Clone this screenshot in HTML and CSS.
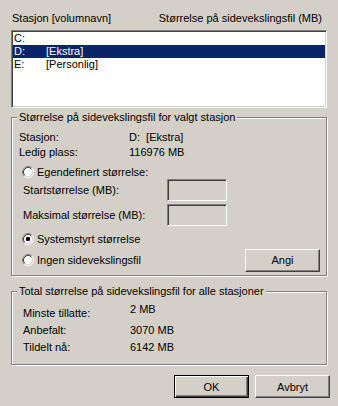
FILE: index.html
```html
<!DOCTYPE html>
<html lang="no">
<head>
    <meta charset="UTF-8">
    <meta name="viewport" content="width=device-width, initial-scale=1.0">
    <title>Virtuelt minne</title>
    <link rel="stylesheet" href="styles.css">
</head>
<body>
    <div class="dialog">
        <div class="list-head">
            <span>Stasjon [volumnavn]</span>
            <span>Størrelse på sidevekslingsfil (MB)</span>
        </div>
        <div class="list">
            <div class="list-row"><span class="drive">C:</span><span></span></div>
            <div class="list-row selected"><span class="drive">D:</span><span>[Ekstra]</span></div>
            <div class="list-row"><span class="drive">E:</span><span>[Personlig]</span></div>
        </div>

        <div class="group group-drive">
            <div class="group-title">Størrelse på sidevekslingsfil for valgt stasjon</div>
            <div class="info-row"><span class="info-label">Stasjon:</span><span>D:&nbsp; [Ekstra]</span></div>
            <div class="info-row"><span class="info-label">Ledig plass:</span><span>116976 MB</span></div>
            <div class="radio-row first-radio">
                <svg class="radio" width="12" height="12" viewBox="0 0 12 12">
                    <circle cx="6" cy="6" r="4.5" fill="#fff"/>
                    <path d="M2.11 9.89 A5.5 5.5 0 0 1 9.89 2.11" fill="none" stroke="#808080"/>
                    <path d="M2.11 9.89 A5.5 5.5 0 0 0 9.89 2.11" fill="none" stroke="#fff"/>
                    <path d="M2.82 9.18 A4.5 4.5 0 0 1 9.18 2.82" fill="none" stroke="#404040"/>
                    <path d="M2.82 9.18 A4.5 4.5 0 0 0 9.18 2.82" fill="none" stroke="#d4d0c8"/>
                </svg>
                <span>Egendefinert størrelse:</span>
            </div>
            <div class="size-row">
                <span class="size-label">Startstørrelse (MB):</span>
                <div class="textbox"></div>
            </div>
            <div class="size-row size-max">
                <span class="size-label">Maksimal størrelse (MB):</span>
                <div class="textbox"></div>
            </div>
            <div class="radio-row system-radio">
                <svg class="radio" width="12" height="12" viewBox="0 0 12 12">
                    <circle cx="6" cy="6" r="4.5" fill="#fff"/>
                    <path d="M2.11 9.89 A5.5 5.5 0 0 1 9.89 2.11" fill="none" stroke="#808080"/>
                    <path d="M2.11 9.89 A5.5 5.5 0 0 0 9.89 2.11" fill="none" stroke="#fff"/>
                    <path d="M2.82 9.18 A4.5 4.5 0 0 1 9.18 2.82" fill="none" stroke="#404040"/>
                    <path d="M2.82 9.18 A4.5 4.5 0 0 0 9.18 2.82" fill="none" stroke="#d4d0c8"/>
                    <rect x="4" y="4" width="4" height="4" rx="1.2" fill="#000"/>
                </svg>
                <span>Systemstyrt størrelse</span>
            </div>
            <div class="radio-row last-radio">
                <div class="radio-wrap">
                    <svg class="radio" width="12" height="12" viewBox="0 0 12 12">
                        <circle cx="6" cy="6" r="4.5" fill="#fff"/>
                        <path d="M2.11 9.89 A5.5 5.5 0 0 1 9.89 2.11" fill="none" stroke="#808080"/>
                        <path d="M2.11 9.89 A5.5 5.5 0 0 0 9.89 2.11" fill="none" stroke="#fff"/>
                        <path d="M2.82 9.18 A4.5 4.5 0 0 1 9.18 2.82" fill="none" stroke="#404040"/>
                        <path d="M2.82 9.18 A4.5 4.5 0 0 0 9.18 2.82" fill="none" stroke="#d4d0c8"/>
                    </svg>
                    <span>Ingen sidevekslingsfil</span>
                </div>
                <button class="btn btn-angi">Angi</button>
            </div>
        </div>

        <div class="group group-total">
            <div class="group-title">Total størrelse på sidevekslingsfil for alle stasjoner</div>
            <div class="total-row"><span class="total-label">Minste tillatte:</span><span class="raised">2 MB</span></div>
            <div class="total-row"><span class="total-label">Anbefalt:</span><span>3070 MB</span></div>
            <div class="total-row"><span class="total-label">Tildelt nå:</span><span>6142 MB</span></div>
        </div>

        <div class="buttons">
            <button class="btn btn-default">OK</button>
            <button class="btn">Avbryt</button>
        </div>
    </div>
</body>
</html>
```

FILE: styles.css
```css
body {
    margin: 0;
    background: #d4d0c8;
    font-family: "Liberation Sans", Arial, sans-serif;
    font-size: 11px;
    color: #000;
}
.dialog {
    padding: 12px 8px 0 11px;
}
.list-head {
    width: 316px;
    box-sizing: border-box;
    display: flex;
    justify-content: space-between;
    line-height: 13px;
    height: 13px;
    padding: 0 5px 0 1px;
}
.list {
    width: 316px;
    height: 78px;
    box-sizing: border-box;
    margin-top: 5px;
    background: #fff;
    border: 1px solid;
    border-color: #808080 #fff #fff #808080;
    box-shadow: inset 1px 1px #404040, inset -1px -1px #d4d0c8;
    padding: 1px;
}
.list-row {
    display: flex;
    height: 13px;
    line-height: 13px;
    padding-left: 1px;
}
.list-row .drive {
    width: 32px;
}
.list-row.selected {
    background: #0a246a;
    color: #fff;
}
.group {
    width: 316px;
    box-sizing: border-box;
    border: 1px solid #808080;
    box-shadow: inset 1px 1px #fff, 1px 1px #fff;
}
.group-drive {
    margin-top: 9px;
    padding-bottom: 4px;
}
.group-title {
    width: fit-content;
    margin: -7px 0 0 5px;
    padding: 0 2px;
    line-height: 13px;
    background: #d4d0c8;
}
.info-row {
    display: flex;
    height: 15px;
    line-height: 15px;
    padding-left: 7px;
}
.info-row:first-of-type,
.group-title + .info-row {
    margin-top: 6px;
}
.info-label {
    width: 110px;
}
.radio-row {
    display: flex;
    align-items: center;
    height: 14px;
    padding-left: 10px;
}
.radio-wrap {
    display: flex;
    align-items: center;
}
.radio {
    display: block;
    margin-right: 3px;
}
.first-radio {
    margin-top: 5px;
}
.system-radio {
    margin-top: 6px;
}
.last-radio {
    height: 22px;
    margin-top: 3px;
    justify-content: space-between;
    padding-right: 6px;
}
.size-row {
    display: flex;
    align-items: center;
    height: 22px;
    padding-left: 11px;
}
.size-max {
    margin-top: 3px;
}
.size-label {
    width: 144px;
}
.textbox {
    width: 60px;
    height: 22px;
    box-sizing: border-box;
    border: 1px solid;
    border-color: #808080 #fff #fff #808080;
    box-shadow: inset 1px 1px #404040, inset -1px -1px #d4d0c8;
}
.btn {
    width: 75px;
    height: 23px;
    box-sizing: border-box;
    padding: 0;
    font-family: inherit;
    font-size: 11px;
    color: #000;
    background: #d4d0c8;
    border: 1px solid;
    border-color: #fff #404040 #404040 #fff;
    box-shadow: inset -1px -1px #808080;
}
.btn-default {
    border: 1px solid #000;
    box-shadow: inset 1px 1px #fff, inset -1px -1px #404040, inset -2px -2px #808080;
}
.group-total {
    margin-top: 15px;
    padding-bottom: 9px;
}
.total-row {
    display: flex;
    align-items: center;
    height: 17px;
    padding-left: 11px;
}
.group-title + .total-row {
    margin-top: 6px;
}
.total-label {
    width: 107px;
}
.raised {
    margin-bottom: 8px;
}
.buttons {
    display: flex;
    justify-content: flex-end;
    gap: 6px;
    margin-top: 10px;
}
```
